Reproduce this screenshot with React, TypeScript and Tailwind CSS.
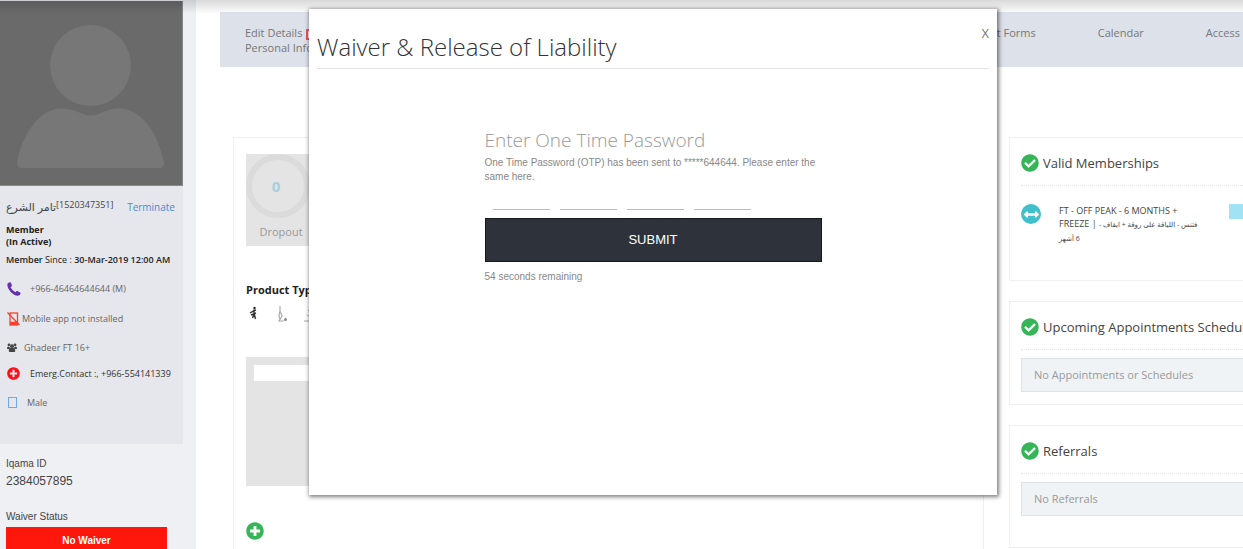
import type { ReactNode } from "react"
import {
  FaArrowsAltH,
  FaCheckCircle,
  FaPlusCircle,
} from "react-icons/fa"

const navItems = ["Consent Forms", "Calendar", "Access"]

export default function App() {
  return (
    <div className="relative flex h-screen overflow-hidden bg-white font-['Open_Sans','DejaVu_Sans',sans-serif] text-[#444]">
      <Sidebar />

      <main className="min-w-0 flex-1 pt-3 pl-6">
        <NavBar />
        <div className="mt-[70px] flex gap-[25px] pl-[13px]">
          <MemberPanel />
          <div className="flex w-[234px] shrink-0 flex-col gap-[20px]">
            <Memberships />
            <StatusCard
              title="Upcoming Appointments Schedule"
              empty="No Appointments or Schedules"
              className="h-[104px]"
            />
            <StatusCard
              title="Referrals"
              empty="No Referrals"
              className="h-[123px]"
            />
          </div>
        </div>
      </main>

      <div className="absolute inset-x-0 top-0 h-[14px] bg-linear-to-b from-black/15 to-transparent" />
      <OtpDialog />
    </div>
  )
}

function Sidebar() {
  return (
    <aside className="w-[196px] shrink-0 bg-[#eff0f4] pt-px">
      <div className="mr-[13px] h-[443px] bg-[#e6e7ec]">
        <Avatar />
        <div className="flex items-center justify-between pt-3 pr-2 pl-[6px]">
          <div className="flex h-[18px] items-center">
            <bdi dir="rtl" className="text-[11px] whitespace-nowrap">تامر الشرع</bdi>
            <span className="pb-1 text-[9px]">[1520347351]</span>
          </div>
          <a href="#terminate" className="text-[10px] font-medium text-[#4a8ad4]">
            Terminate
          </a>
        </div>
        <div className="pt-2 pl-[6px] text-[9px] leading-3 font-bold text-[#222]">
          <p>Member</p>
          <p>(In Active)</p>
          <p className="pt-[6px] font-semibold whitespace-nowrap">
            Member <span className="font-normal">Since :</span> 30-Mar-2019 12:00 AM
          </p>
        </div>
        <ul className="pt-2 text-[9px] text-[#666]">
          <InfoRow className="h-[30px] gap-[9px]" icon={<PhoneIcon />}>
            +966-46464644644 (M)
          </InfoRow>
          <InfoRow className="h-[30px] gap-[2px]" icon={<MobileOffIcon />}>
            Mobile app not installed
          </InfoRow>
          <InfoRow className="h-[27px] gap-[7px]" icon={<GroupIcon />}>
            Ghadeer FT 16+
          </InfoRow>
          <InfoRow className="h-[25px] gap-[10px] text-[#333]" icon={<FaPlusCircle className="size-[13px] text-[#f8101a]" />}>
            Emerg.Contact :, +966-554141339
          </InfoRow>
          <InfoRow
            className="h-[33px] gap-[10px]"
            icon={<span className="ml-px h-[11px] w-[9px] border border-[#75a5ee]" />}
          >
            Male
          </InfoRow>
        </ul>
      </div>

      <div className="pt-[14px] pr-[29px] pl-[6px] font-['Liberation_Sans',sans-serif]">
        <p className="text-[10px] leading-3">Iqama ID</p>
        <p className="pt-[3px] text-[12px] leading-4">2384057895</p>
        <p className="pt-[22px] text-[10px] leading-3">Waiver Status</p>
        <button className="mt-1 h-[26px] w-full bg-[#ff170c] text-[10px] font-bold text-white">
          No Waiver
        </button>
      </div>
    </aside>
  )
}

function InfoRow({
  icon,
  className,
  children,
}: {
  icon: ReactNode
  className: string
  children: ReactNode
}) {
  return (
    <li className={`flex items-center pl-[7px] whitespace-nowrap ${className}`}>
      {icon}
      <span>{children}</span>
    </li>
  )
}

function Avatar() {
  return (
    <svg viewBox="0 0 183 185" className="block h-[185px] w-full bg-[#6a6a6a]">
      <circle cx="90.500" cy="64.500" r="40.500" fill="#777" />
      <path
        d="M22 167q-5 0-5-5C22 133 40 107 62 107.500C77 108 82 114.500 91 114.500S104 108 118 107.500C141 107 158 131 164 162q0 5-5 5z"
        fill="#777"
      />
      <path d="M0 184.500H182.500V0" fill="none" stroke="#888" />
    </svg>
  )
}

function PhoneIcon() {
  return (
    <svg viewBox="0 0 14 14" className="size-[14px]" fill="#6433ad">
      <path d="M.6 1.500Q2 .2 3.200.2q.6 0 .9.900l.8 2.300q.2.700-.4 1.100l-1 .8q1.600 3.200 4.900 5l.9-1q.5-.5 1.100-.2l2.600 1.300q.8.400.6 1.100-.4 2-2.600 2.300Q7.500 14 3.500 9.700-.6 5.200.6 1.500z" />
    </svg>
  )
}

function MobileOffIcon() {
  return (
    <svg viewBox="0 0 13 14" className="h-[14px] w-[13px]" fill="none" stroke="#f8402e">
      <rect x="3" y="1" width="7.500" height="12" strokeWidth="1.300" />
      <path d="M3 10.500h7.500M.5.500l12 12.500" strokeWidth="1.300" />
      <path d="M3 10.500h7.500V13H3z" fill="#f8402e" stroke="none" />
    </svg>
  )
}

function GroupIcon() {
  return (
    <svg viewBox="0 0 10 9" className="h-[9px] w-[10px]" fill="#444">
      <circle cx="2" cy="1.800" r="1.400" />
      <circle cx="8" cy="1.800" r="1.400" />
      <circle cx="5" cy="3.200" r="1.900" />
      <path d="M0 5.500Q0 3.300 1.500 3.500L3.400 5 2 6H.7Q0 6 0 5.500zM10 5.500Q10 3.300 8.500 3.500L6.600 5 8 6h1.300q.7 0 .7-.5zM1.800 8Q1.800 5 3.400 5h3.200q1.600 0 1.600 3 0 1-1 1H2.800q-1 0-1-1z" />
    </svg>
  )
}

function NavBar() {
  return (
    <nav className="flex h-[55px] items-start justify-between overflow-hidden bg-[#dde1ea] pt-[13px] pl-[25px] text-[11px] leading-[15px] text-[#777]">
      <a href="#edit" className="whitespace-nowrap">
        <span className="flex items-center gap-1">
          Edit Details
          <span className="mt-1 size-[11px] border-2 border-[#f0525f] bg-white" />
        </span>
        Personal Info
      </a>
      <div className="flex shrink-0 gap-[62px] pr-[3px] whitespace-nowrap">
        {navItems.map((item) => (
          <a key={item} href="#nav">
            {item}
          </a>
        ))}
      </div>
    </nav>
  )
}

function MemberPanel() {
  return (
    <section className="h-[440px] min-w-0 flex-1 border border-[#efefef] pt-4 pl-3">
      <div className="h-[92px] w-[70px] bg-[#e4e4e4] text-center">
        <div className="flex size-16 items-center justify-center rounded-full border-[6px] border-[#dbdbdb] text-[15px] font-bold text-[#a5cfdd]">
          <span className="pr-1">0</span>
        </div>
        <p className="pt-[6px] text-[11px] leading-4 text-[#999]">Dropout</p>
      </div>
      <h3 className="pt-[35px] text-[11px] leading-[17px] font-bold text-[#222]">Product Type</h3>
      <ExerciseIcons />
      <div className="mt-[34px] h-[129px] w-[120px] bg-[#e4e4e4] pt-2 pl-2">
        <input aria-label="Product note" className="block h-4 w-full bg-white" />
      </div>
      <button aria-label="Add product" className="mt-9 block text-[#35b558]">
        <FaPlusCircle className="size-[18px]" />
      </button>
    </section>
  )
}

function ExerciseIcons() {
  return (
    <svg viewBox="0 0 70 18" className="mt-[7px] block h-[18px] w-[70px]" fill="none">
      <circle cx="8.500" cy="3" r="1.200" fill="#222" />
      <path d="M8 4.500v4.500l-1.500 4M8 8l1.500 6M4 8l3.500-2L10 5M5 10l5-2" stroke="#333" strokeWidth="1.400" />
      <path d="M34 1v5l2 5-3 5h5M34 6l-1 4 1 5" stroke="#aaa" strokeWidth="1.200" />
      <circle cx="39.500" cy="14.500" r="1.500" fill="#888" />
      <path d="M58 16h8M62 6l3-2M61 10l3 2" stroke="#aaa" />
    </svg>
  )
}

function CardTitle({ children }: { children: ReactNode }) {
  return (
    <h2 className="flex h-8 items-start gap-1 border-b border-dotted border-[#e5e5e5] text-[13px] leading-[19px] whitespace-nowrap">
      <FaCheckCircle className="size-[18px] shrink-0 text-[#35b558]" />
      {children}
    </h2>
  )
}

function Memberships() {
  return (
    <section className="h-[144px] overflow-hidden border border-r-0 border-[#efefef] pt-4 pl-[11px]">
      <CardTitle>Valid Memberships</CardTitle>
      <div className="flex items-start pt-[18px]">
        <span className="flex size-5 shrink-0 items-center justify-center rounded-full bg-[#41bfca] text-white">
          <FaArrowsAltH className="size-[15px]" />
        </span>
        <p className="ml-[18px] w-[170px] shrink-0 text-[9px] leading-[13px] whitespace-nowrap">
          FT - OFF PEAK - 6 MONTHS +
          <br />
          FREEZE | <bdi dir="rtl" className="text-[7px]">فتنس - اللياقة على روقة + ايقاف -</bdi>
          <br />
          <bdi dir="rtl" className="text-[7px]">6 أشهر</bdi>
        </p>
        <span className="h-[15px] flex-1 bg-[#a1e3f5]" />
      </div>
    </section>
  )
}

function StatusCard({
  title,
  empty,
  className,
}: {
  title: string
  empty: string
  className: string
}) {
  return (
    <section className={`overflow-hidden border border-r-0 border-[#efefef] pt-4 pl-[11px] ${className}`}>
      <CardTitle>{title}</CardTitle>
      <p className="mt-2 flex h-[34px] items-center border border-r-0 border-[#dfe2e5] bg-[#f0f3f6] pl-3 text-[11px] text-[#999]">
        {empty}
      </p>
    </section>
  )
}

function OtpDialog() {
  return (
    <div className="absolute inset-0 flex items-start justify-center pt-[9px] pl-[63px]">
      <div
        role="dialog"
        aria-labelledby="waiver-title"
        className="h-[486px] w-full max-w-[688px] bg-white px-2 shadow-[1px_1px_4px_1px_rgba(0,0,0,0.5)]"
      >
        <div className="flex h-[60px] items-start justify-between border-b border-[#e3e3e3]">
          <h1 id="waiver-title" className="pt-[22px] text-[24px] leading-8 font-light text-[#333]">
            Waiver &amp; Release of Liability
          </h1>
          <button aria-label="Close" className="pt-4 text-[13px] leading-4 text-[#777]">
            X
          </button>
        </div>

        <form
          className="mx-auto w-[337px] pt-[57px] font-['Liberation_Sans',sans-serif] text-[10px] leading-[14px] text-[#888]"
          onSubmit={(e) => e.preventDefault()}
        >
          <h2 className="font-['Open_Sans',sans-serif] text-[19px] leading-7 font-light text-[#999]">
            Enter One Time Password
          </h2>
          <p className="pt-[2px]">
            One Time Password (OTP) has been sent to *****644644. Please enter the same here.
          </p>
          <div className="flex gap-[10px] pt-[10px] pl-2">
            {[1, 2, 3, 4].map((n) => (
              <input
                key={n}
                aria-label={`Digit ${n}`}
                maxLength={1}
                className="h-4 w-[57px] border-b border-[#bbb] text-center outline-none"
              />
            ))}
          </div>
          <button className="mt-2 h-11 w-full border border-[#14181d] bg-[#2e333b] text-[13px] text-white">
            SUBMIT
          </button>
          <p className="pt-2">54 seconds remaining</p>
        </form>
      </div>
    </div>
  )
}
